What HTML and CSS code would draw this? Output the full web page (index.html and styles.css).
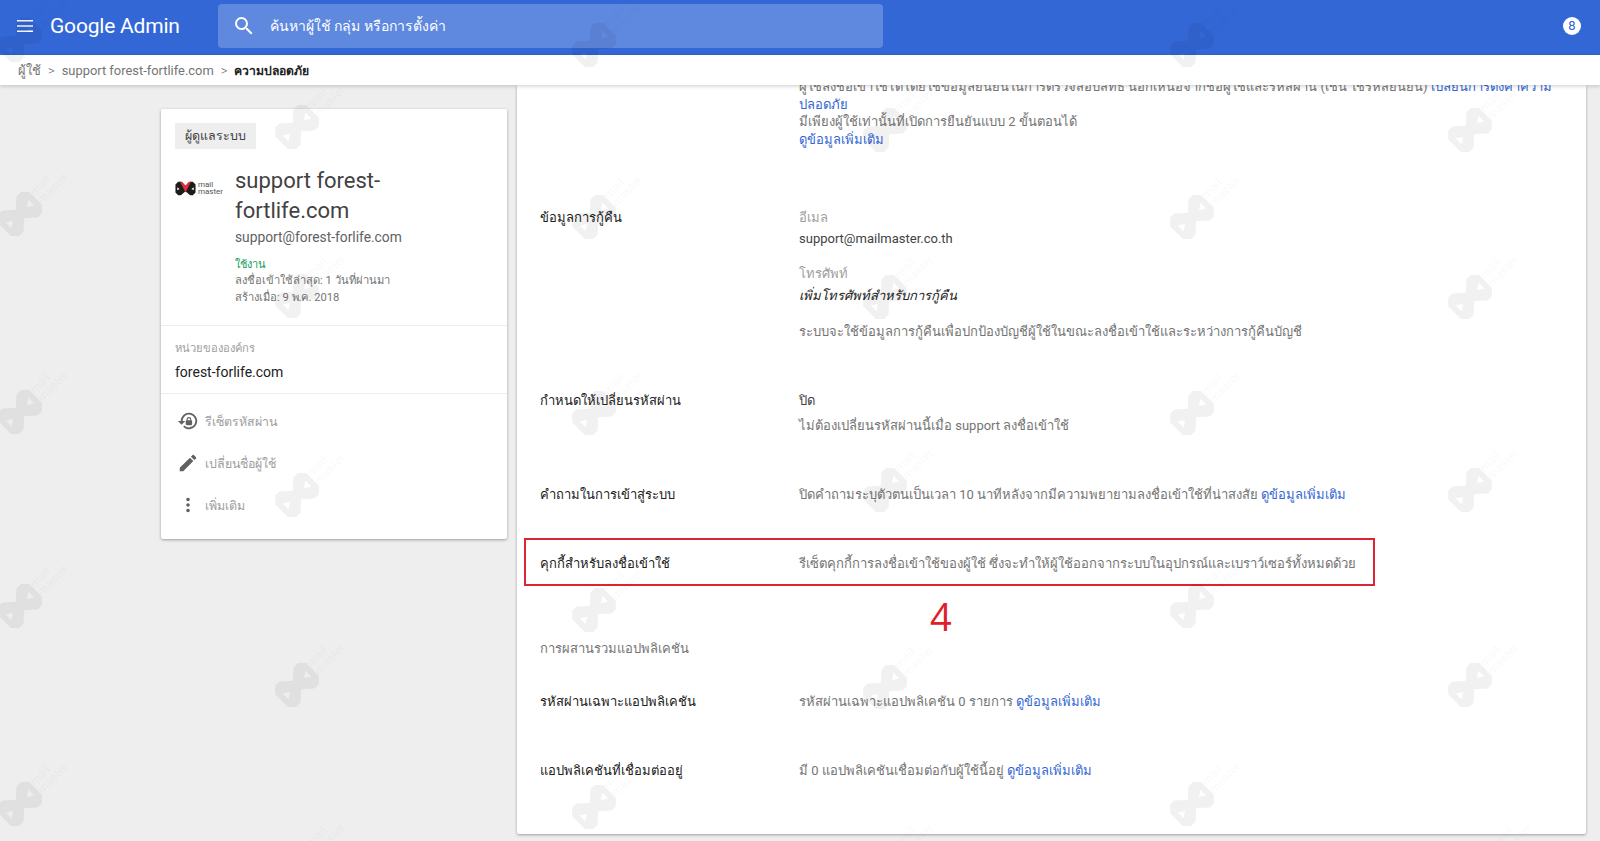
FILE: index.html
```html
<!DOCTYPE html>
<html lang="th">
<head>
    <meta charset="UTF-8">
    <meta name="viewport" content="width=device-width, initial-scale=1.0">
    <link rel="stylesheet" href="styles.css">
    <title>Google Admin</title>
</head>
<body>
    <svg class="defs" width="0" height="0">
        <defs>
            <g id="mark">
                <g transform="rotate(-45)">
                    <path fill-rule="evenodd" d="M-22-9l6-6h6L0-6l10-9h6l6 6V9l-6 6h-6L0 6l-10 9h-6l-6-6zM-16-4V4l6-4zM16-4V4l-6-4z"/>
                </g>
                <g class="mark-label" transform="translate(18 -14) rotate(-45)">
                    <text class="mark-text" x="0" y="-5">mail</text>
                    <text class="mark-text" x="0" y="6">master</text>
                </g>
            </g>
        </defs>
    </svg>

    <header class="topbar">
        <svg class="menu-icon" viewBox="0 0 16 12"><path d="M0 0h16v1.4H0zM0 5.3h16v1.4H0zM0 10.6h16V12H0z"/></svg>
        <div class="brand">Google Admin</div>
        <div class="search">
            <svg class="search-icon" viewBox="0 0 24 24"><path d="M15.5 14h-.79l-.28-.27A6.47 6.47 0 0 0 16 9.5 6.5 6.5 0 1 0 9.5 16c1.61 0 3.09-.59 4.23-1.57l.27.28v.79l5 4.99L20.49 19l-4.99-5zm-6 0C7.01 14 5 11.99 5 9.5S7.01 5 9.5 5 14 7.01 14 9.5 11.99 14 9.5 14z"/></svg>
            <span>ค้นหาผู้ใช้ กลุ่ม หรือการตั้งค่า</span>
        </div>
        <div class="avatar">8</div>
    </header>

    <nav class="crumbs">
        <span>ผู้ใช้</span>
        <span class="sep">&gt;</span>
        <span>support forest-fortlife.com</span>
        <span class="sep">&gt;</span>
        <b>ความปลอดภัย</b>
    </nav>

    <main class="content">
        <aside class="user-card">
            <div class="user-top">
                <div class="badge">ผู้ดูแลระบบ</div>
                <div class="user-head">
                    <div class="logo">
                        <svg class="logo-bow" viewBox="-23 -16 46 32">
                            <path fill="#1c1c1c" fill-rule="evenodd" d="M-22-9l6-6h6L0-6l10-9h6l6 6V9l-6 6h-6L0 6l-10 9h-6l-6-6zM-18-3V4l5-3zM18-3V4l-5-3z"/>
                            <path fill="#d8303c" d="M-12-15h5L0-6 7-15h5L0 9z"/>
                        </svg>
                        <div class="logo-text">mail<br>master</div>
                    </div>
                    <div class="user-info">
                        <h2>support forest-fortlife.com</h2>
                        <p class="user-mail">support@forest-forlife.com</p>
                        <p class="user-status">ใช้งาน</p>
                        <p class="user-meta">ลงชื่อเข้าใช้ล่าสุด: 1 วันที่ผ่านมา</p>
                        <p class="user-meta">สร้างเมื่อ: 9 พ.ค. 2018</p>
                    </div>
                </div>
            </div>
            <div class="org">
                <p class="org-label">หน่วยขององค์กร</p>
                <p class="org-name">forest-forlife.com</p>
            </div>
            <ul class="actions">
                <li>
                    <svg viewBox="0 0 24 24"><path d="M13 3a9 9 0 0 0-9 9H1l4 4 4-4H6a7 7 0 1 1 2.1 5l-1.4 1.4A9 9 0 1 0 13 3z"/><path d="M15.5 11.2v-1a2.5 2.5 0 0 0-5 0v1c-.5 0-1 .5-1 1v3.3c0 .5.5 1 1 1h5c.5 0 1-.5 1-1v-3.3c0-.5-.5-1-1-1zm-1.2 0h-2.6v-1a1.3 1.3 0 0 1 2.6 0z"/></svg>
                    รีเซ็ตรหัสผ่าน
                </li>
                <li>
                    <svg viewBox="0 0 24 24"><path d="M3 17.2V21h3.8L17.8 9.9l-3.7-3.7zM20.7 7a1 1 0 0 0 0-1.4l-2.3-2.3a1 1 0 0 0-1.4 0l-1.8 1.8 3.7 3.7z"/></svg>
                    เปลี่ยนชื่อผู้ใช้
                </li>
                <li>
                    <svg viewBox="0 0 24 24"><path d="M12 8a2 2 0 1 0 0-4 2 2 0 0 0 0 4zm0 2a2 2 0 1 0 0 4 2 2 0 0 0 0-4zm0 6a2 2 0 1 0 0 4 2 2 0 0 0 0-4z"/></svg>
                    เพิ่มเติม
                </li>
            </ul>
        </aside>

        <section class="detail">
            <div class="row row-first">
                <div class="row-label"></div>
                <div class="row-value">
                    <p class="tight">ผู้ใช้ลงชื่อเข้าใช้ได้โดยใช้ข้อมูลยืนยันในการตรวจสอบสิทธิ์ นอกเหนือจากชื่อผู้ใช้และรหัสผ่าน (เช่น ใช้รหัสยืนยัน) <a href="#">เปลี่ยนการตั้งค่าความปลอดภัย</a></p>
                    <p class="tight">มีเพียงผู้ใช้เท่านั้นที่เปิดการยืนยันแบบ 2 ขั้นตอนได้</p>
                    <p class="tight"><a href="#">ดูข้อมูลเพิ่มเติม</a></p>
                </div>
            </div>

            <div class="row row-recovery">
                <div class="row-label">ข้อมูลการกู้คืน</div>
                <div class="row-value">
                    <p class="sub">อีเมล</p>
                    <p class="dark gap-3">support@mailmaster.co.th</p>
                    <p class="sub gap-17">โทรศัพท์</p>
                    <p class="add gap-4">เพิ่มโทรศัพท์สำหรับการกู้คืน</p>
                    <p class="gap-18">ระบบจะใช้ข้อมูลการกู้คืนเพื่อปกป้องบัญชีผู้ใช้ในขณะลงชื่อเข้าใช้และระหว่างการกู้คืนบัญชี</p>
                </div>
            </div>

            <div class="row row-change">
                <div class="row-label">กำหนดให้เปลี่ยนรหัสผ่าน</div>
                <div class="row-value">
                    <p class="dark">ปิด</p>
                    <p class="gap-7">ไม่ต้องเปลี่ยนรหัสผ่านนี้เมื่อ support ลงชื่อเข้าใช้</p>
                </div>
            </div>

            <div class="row row-challenge">
                <div class="row-label">คำถามในการเข้าสู่ระบบ</div>
                <div class="row-value">
                    <p>ปิดคำถามระบุตัวตนเป็นเวลา 10 นาทีหลังจากมีความพยายามลงชื่อเข้าใช้ที่น่าสงสัย <a href="#">ดูข้อมูลเพิ่มเติม</a></p>
                </div>
            </div>

            <div class="row row-cookie">
                <div class="row-label">คุกกี้สำหรับลงชื่อเข้าใช้</div>
                <div class="row-value">
                    <p>รีเซ็ตคุกกี้การลงชื่อเข้าใช้ของผู้ใช้ ซึ่งจะทำให้ผู้ใช้ออกจากระบบในอุปกรณ์และเบราว์เซอร์ทั้งหมดด้วย</p>
                </div>
            </div>

            <h3 class="group-title">การผสานรวมแอปพลิเคชัน</h3>

            <div class="row row-apppass">
                <div class="row-label">รหัสผ่านเฉพาะแอปพลิเคชัน</div>
                <div class="row-value">
                    <p>รหัสผ่านเฉพาะแอปพลิเคชัน 0 รายการ <a href="#">ดูข้อมูลเพิ่มเติม</a></p>
                </div>
            </div>

            <div class="row row-apps">
                <div class="row-label">แอปพลิเคชันที่เชื่อมต่ออยู่</div>
                <div class="row-value">
                    <p>มี 0 แอปพลิเคชันเชื่อมต่อกับผู้ใช้นี้อยู่ <a href="#">ดูข้อมูลเพิ่มเติม</a></p>
                </div>
            </div>

            <div class="red-box"></div>
            <div class="red-number">4</div>
        </section>
    </main>

    <!-- ลายน้ำ mail master -->
    <svg class="watermark" viewBox="0 0 1600 841">
        <use href="#mark" x="20" y="40"/>
        <use href="#mark" x="20" y="214"/>
        <use href="#mark" x="20" y="412"/>
        <use href="#mark" x="20" y="606"/>
        <use href="#mark" x="20" y="804"/>
        <use href="#mark" x="297" y="127"/>
        <use href="#mark" x="297" y="296"/>
        <use href="#mark" x="297" y="495"/>
        <use href="#mark" x="297" y="685"/>
        <use href="#mark" x="297" y="865"/>
        <use href="#mark" x="594" y="45"/>
        <use href="#mark" x="594" y="217"/>
        <use href="#mark" x="594" y="413"/>
        <use href="#mark" x="594" y="610"/>
        <use href="#mark" x="594" y="807"/>
        <use href="#mark" x="885" y="130"/>
        <use href="#mark" x="885" y="297"/>
        <use href="#mark" x="885" y="490"/>
        <use href="#mark" x="885" y="687"/>
        <use href="#mark" x="885" y="865"/>
        <use href="#mark" x="1192" y="45"/>
        <use href="#mark" x="1192" y="217"/>
        <use href="#mark" x="1192" y="413"/>
        <use href="#mark" x="1192" y="606"/>
        <use href="#mark" x="1192" y="804"/>
        <use href="#mark" x="1470" y="130"/>
        <use href="#mark" x="1470" y="297"/>
        <use href="#mark" x="1470" y="490"/>
        <use href="#mark" x="1470" y="685"/>
        <use href="#mark" x="1483" y="865"/>
    </svg>
</body>
</html>
```

FILE: styles.css
```css
html, body {
    margin: 0;
    height: 841px;
    overflow: hidden;
}

body {
    display: flex;
    flex-direction: column;
    position: relative;
    background-color: #eeeeee;
    font-family: Roboto, "Noto Sans", sans-serif;
    font-size: 13px;
    color: #757575;
}

p, h2, h3, ul {
    margin: 0;
    padding: 0;
}

a {
    color: #3367d6;
    font-weight: 500;
    text-decoration: none;
}

.defs {
    position: absolute;
}

/* แถบด้านบน */
.topbar {
    flex: none;
    height: 55px;
    display: flex;
    align-items: center;
    background-color: #3367d6;
    color: #fff;
}

.menu-icon {
    width: 16px;
    height: 12px;
    margin: -3px 0 0 17px;
    fill: #fff;
}

.brand {
    margin: -3px 0 0 17px;
    width: 168px;
    font-size: 21px;
    letter-spacing: -0.2px;
}

.search {
    width: 665px;
    height: 44px;
    margin-top: -3px;
    display: flex;
    align-items: center;
    background-color: rgba(255, 255, 255, 0.22);
    border-radius: 4px;
    font-size: 14px;
}

.search-icon {
    width: 24px;
    height: 24px;
    margin: 0 14px;
    fill: #fff;
}

.avatar {
    width: 18px;
    height: 18px;
    margin: -3px 19px 0 auto;
    border-radius: 50%;
    background-color: #fff;
    color: #3367d6;
    font-size: 13px;
    line-height: 18px;
    text-align: center;
}

/* breadcrumb */
.crumbs {
    flex: none;
    height: 30px;
    padding-left: 18px;
    display: flex;
    align-items: center;
    gap: 7px;
    background-color: #fff;
    box-shadow: 0 1px 4px rgba(0, 0, 0, 0.2);
    position: relative;
    z-index: 2;
    font-size: 12.9px;
}

.crumbs b {
    color: #212121;
    font-size: 12.2px;
    font-weight: 700;
}

.sep {
    font-weight: 300;
}

.content {
    flex: 1;
    min-height: 0;
    display: flex;
    align-items: flex-start;
    padding-left: 161px;
    gap: 10px;
}

/* การ์ดผู้ใช้ */
.user-card {
    width: 346px;
    height: 430px;
    margin-top: 24px;
    background-color: #fff;
    border-radius: 2px;
    box-shadow: 0 1px 3px rgba(0, 0, 0, 0.35);
}

.user-top {
    height: 217px;
    box-sizing: border-box;
    padding: 14px 14px 0;
    border-bottom: 1px solid #eeeeee;
}

.badge {
    display: inline-block;
    height: 26px;
    padding: 0 10px;
    background-color: #eeeeee;
    color: #424242;
    font-size: 12.5px;
    line-height: 26px;
    vertical-align: top;
}

.user-head {
    display: flex;
    margin-top: 17px;
}

.logo {
    width: 60px;
    flex: none;
    display: flex;
    align-items: flex-start;
    padding-top: 15px;
    gap: 2px;
}

.logo-bow {
    width: 21px;
    height: 15px;
}

.logo-text {
    margin-top: 1px;
    font-size: 8px;
    line-height: 6.5px;
    color: #555;
}

.user-info h2 {
    width: 220px;
    font-size: 22px;
    font-weight: 400;
    line-height: 29.5px;
    color: #424242;
}

.user-mail {
    margin-top: 2px;
    font-size: 13.8px;
    line-height: 20px;
    color: #616161;
}

.user-status {
    margin-top: 10px;
    font-size: 11px;
    line-height: 16px;
    font-weight: 500;
    color: #0f9d58;
}

.user-meta {
    font-size: 11.2px;
    line-height: 16.5px;
}

.org {
    height: 68px;
    padding: 14px 14px 0;
    box-sizing: border-box;
    border-bottom: 1px solid #eeeeee;
}

.org-label {
    font-size: 11.2px;
    line-height: 18px;
    color: #9e9e9e;
}

.org-name {
    margin-top: 5px;
    font-size: 14px;
    line-height: 18px;
    color: #212121;
}

.actions {
    list-style-type: none;
    padding: 6px 0 0 16px;
}

.actions li {
    height: 42px;
    display: flex;
    align-items: center;
    gap: 6px;
    font-size: 12.4px;
    color: #9e9e9e;
}

.actions svg {
    width: 22px;
    height: 22px;
    fill: #616161;
}

/* รายละเอียดความปลอดภัย */
.detail {
    width: 1069px;
    height: 749px;
    box-sizing: border-box;
    position: relative;
    overflow: hidden;
    background-color: #fff;
    border-radius: 0 0 2px 2px;
    box-shadow: 0 1px 3px rgba(0, 0, 0, 0.35);
    padding: 0 23px;
}

.row {
    display: flex;
    line-height: 18px;
}

.row-label {
    width: 259px;
    flex: none;
    color: #212121;
    font-weight: 500;
}

.row-value {
    flex: 1;
}

.row-first {
    margin-top: -7px;
}

.tight {
    line-height: 17.5px;
}

.row-first .row-value {
    height: 70px;
}

.row-recovery {
    margin-top: 61px;
}

.row-change {
    margin-top: 51px;
}

.row-challenge {
    margin-top: 51px;
}

.row-cookie {
    margin-top: 51px;
}

.row-cookie .row-value {
    font-size: 13.05px;
}

.row-apppass {
    margin-top: 35px;
}

.row-apps {
    margin-top: 51px;
}

.group-title {
    margin-top: 67px;
    font-size: 13px;
    font-weight: 400;
    line-height: 18px;
}

.sub {
    color: #9e9e9e;
}

.dark {
    color: #424242;
}

.add {
    color: #212121;
    font-style: italic;
}

.gap-3 { margin-top: 3px; }
.gap-4 { margin-top: 4px; }
.gap-7 { margin-top: 7px; }
.gap-17 { margin-top: 17px; }
.gap-18 { margin-top: 18px; }

/* กรอบสีแดงและหมายเลขกำกับ */
.red-box {
    position: absolute;
    left: 7px;
    top: 453px;
    width: 847px;
    height: 44px;
    border: 2px solid #dc2433;
}

.red-number {
    position: absolute;
    left: 413px;
    top: 506px;
    font-family: "Open Sans", sans-serif;
    font-size: 38px;
    line-height: 50px;
    color: #e02028;
}

.watermark {
    position: absolute;
    left: 0;
    top: 0;
    width: 1600px;
    height: 841px;
    pointer-events: none;
    z-index: 5;
    fill: rgba(0, 0, 0, 0.055);
}

.mark-label {
    opacity: 0.75;
}

.mark-text {
    font-size: 12px;
    font-family: Roboto, sans-serif;
}
```
